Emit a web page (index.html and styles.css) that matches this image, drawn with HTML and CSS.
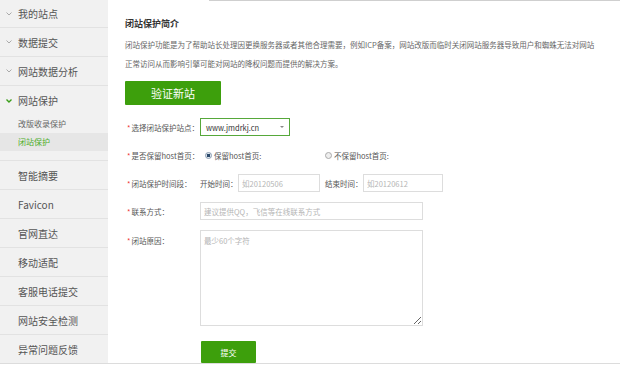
FILE: index.html
```html
<!DOCTYPE html>
<html lang="zh-CN">

<head>
    <meta charset="UTF-8">
    <meta name="viewport" content="width=device-width, initial-scale=1.0">
    <title>闭站保护</title>
    <link rel="stylesheet" href="styles.css">
</head>

<body>
    <div class="page">
        <aside class="sidebar">
            <div class="nav-item first">
                <svg class="chevron" viewBox="0 0 6 4"><polyline points="0.5,0.5 3,3 5.5,0.5" /></svg>我的站点
            </div>
            <div class="nav-item">
                <svg class="chevron" viewBox="0 0 6 4"><polyline points="0.5,0.5 3,3 5.5,0.5" /></svg>数据提交
            </div>
            <div class="nav-item">
                <svg class="chevron" viewBox="0 0 6 4"><polyline points="0.5,0.5 3,3 5.5,0.5" /></svg>网站数据分析
            </div>
            <div class="nav-group">
                <div class="nav-head">
                    <svg class="chevron open" viewBox="0 0 6 4"><polyline points="0.5,0.5 3,3 5.5,0.5" /></svg>网站保护
                </div>
                <div class="sub-item">改版收录保护</div>
                <div class="sub-item active">闭站保护</div>
            </div>
            <div class="nav-item plain">智能摘要</div>
            <div class="nav-item plain">Favicon</div>
            <div class="nav-item plain">官网直达</div>
            <div class="nav-item plain">移动适配</div>
            <div class="nav-item plain">客服电话提交</div>
            <div class="nav-item plain">网站安全检测</div>
            <div class="nav-item plain last">异常问题反馈</div>
        </aside>

        <main class="content">
            <div class="topline"></div>
            <h2 class="title">闭站保护简介</h2>
            <p class="intro">闭站保护功能是为了帮助站长处理因更换服务器或者其他合理需要，例如ICP备案，网站改版而临时关闭网站服务器导致用户和蜘蛛无法对网站<br>正常访问从而影响引擎可能对网站的降权问题而提供的解决方案。</p>
            <button class="btn-verify">验证新站</button>

            <form class="form">
                <div class="row">
                    <label class="label"><span class="req">*</span>选择闭站保护站点：</label>
                    <div class="select">
                        <span>www.jmdrkj.cn</span>
                        <span class="caret"></span>
                    </div>
                </div>
                <div class="row">
                    <label class="label"><span class="req">*</span>是否保留host首页：</label>
                    <span class="radio-opt first-opt"><span class="radio checked"></span>保留host首页:</span>
                    <span class="radio-opt"><span class="radio"></span>不保留host首页:</span>
                </div>
                <div class="row">
                    <label class="label"><span class="req">*</span>闭站保护时间段：</label>
                    <span class="small-label">开始时间：</span>
                    <input class="input date" type="text" placeholder="如20120506">
                    <span class="small-label end">结束时间：</span>
                    <input class="input date" type="text" placeholder="如20120612">
                </div>
                <div class="row">
                    <label class="label"><span class="req">*</span>联系方式：</label>
                    <input class="input wide" type="text" placeholder="建议提供QQ，飞信等在线联系方式">
                </div>
                <div class="row top">
                    <label class="label"><span class="req">*</span>闭站原因：</label>
                    <textarea class="textarea" placeholder="最少60个字符"></textarea>
                </div>
                <div class="row actions">
                    <button type="button" class="btn-submit">提交</button>
                </div>
            </form>
        </main>
    </div>
</body>

</html>
```

FILE: styles.css
```css
body {
    margin: 0;
    padding: 0;
    background-color: #fff;
    font-family: "Noto Sans CJK SC", "Liberation Sans", sans-serif;
    color: #555;
}

.page {
    display: flex;
    height: 363px;
    border-bottom: 1px solid #dcdcdc;
    overflow: hidden;
}

/* sidebar */
.sidebar {
    width: 108px;
    flex-shrink: 0;
    background-color: #f1f1f1;
}

.nav-item {
    display: flex;
    align-items: center;
    height: 28px;
    padding-left: 6px;
    border-bottom: 1px solid #e2e2e2;
    font-size: 10px;
    color: #555;
}

.nav-item.first {
    height: 27px;
}

.nav-item.plain {
    padding-left: 18px;
}

.nav-item.last {
    border-bottom: none;
}

.chevron {
    width: 6px;
    height: 4px;
    margin-right: 6px;
    fill: none;
    stroke: #aaa;
    stroke-width: 1;
}

.chevron.open {
    stroke: #3a9e1a;
    stroke-width: 1.4;
}

.nav-group {
    padding-bottom: 9px;
    border-bottom: 1px solid #e2e2e2;
}

.nav-head {
    display: flex;
    align-items: center;
    height: 29px;
    padding-left: 6px;
    font-size: 10px;
    color: #555;
}

.sub-item {
    height: 18px;
    line-height: 18px;
    padding-left: 18px;
    font-size: 8px;
    color: #666;
}

.sub-item.active {
    background-color: #e6e6e6;
    color: #4cae2a;
}

/* content */
.content {
    flex: 1;
    padding-left: 17px;
}

.topline {
    margin-left: 84px;
    border-top: 1px solid #cfcfcf;
}

.title {
    margin: 16px 0 0;
    font-size: 9px;
    line-height: 13px;
    font-weight: bold;
    color: #333;
}

.intro {
    margin: 5px 0 0;
    font-size: 7.5px;
    line-height: 19px;
    color: #666;
}

.btn-verify {
    display: block;
    width: 96px;
    height: 24px;
    margin-top: 8px;
    background-color: #3d9f0c;
    color: #fff;
    border: none;
    border-radius: 1px;
    font-family: inherit;
    font-size: 11px;
    padding: 0;
}

.form {
    margin-top: 13px;
}

.row {
    display: flex;
    align-items: center;
    min-height: 18px;
    margin-bottom: 10px;
    font-size: 7.5px;
    color: #555;
}

.row.top {
    align-items: flex-start;
}

.row.top .label {
    margin-top: 5px;
}

.label {
    width: 75px;
    flex-shrink: 0;
    white-space: nowrap;
}

.req {
    color: #e33;
    margin-left: 2px;
    margin-right: 1px;
}

.select {
    display: flex;
    align-items: center;
    justify-content: space-between;
    box-sizing: border-box;
    width: 90px;
    height: 18px;
    padding: 0 5px;
    border: 1px solid #56a83a;
    color: #333;
}

.caret {
    width: 0;
    height: 0;
    border-left: 2.5px solid transparent;
    border-right: 2.5px solid transparent;
    border-top: 2.5px solid #888;
}

.radio-opt {
    display: flex;
    align-items: center;
}

.radio-opt.first-opt {
    width: 120px;
    margin-left: 5px;
}

.radio {
    box-sizing: border-box;
    width: 7px;
    height: 7px;
    margin-right: 2px;
    border: 1px solid #aaa;
    border-radius: 50%;
    background-color: #eee;
}

.radio.checked {
    border-color: #8a9bb0;
    background: radial-gradient(circle, #2c4a6b 40%, #dfe6ee 45%);
}

.small-label {
    width: 38px;
    white-space: nowrap;
}

.small-label.end {
    margin-left: 5px;
}

.input {
    box-sizing: border-box;
    height: 18px;
    padding: 0 3px;
    border: 1px solid #ddd;
    outline: none;
    font-family: inherit;
    font-size: 7.5px;
    color: #333;
}

.input::placeholder,
.textarea::placeholder {
    color: #b5b5b5;
}

.input.date {
    width: 82px;
}

.input.date:last-child {
    width: 80px;
}

.input.wide {
    width: 223px;
}

.textarea {
    box-sizing: border-box;
    width: 223px;
    height: 96px;
    padding: 4px 3px;
    border: 1px solid #ddd;
    outline: none;
    font-family: inherit;
    font-size: 7.5px;
    color: #333;
}

.row.actions {
    margin-top: 15px;
    padding-left: 76px;
}

.btn-submit {
    width: 55px;
    height: 22px;
    padding: 0;
    border: none;
    border-radius: 1px;
    background-color: #3d9f0c;
    color: #fff;
    font-family: inherit;
    font-size: 8px;
}
```
